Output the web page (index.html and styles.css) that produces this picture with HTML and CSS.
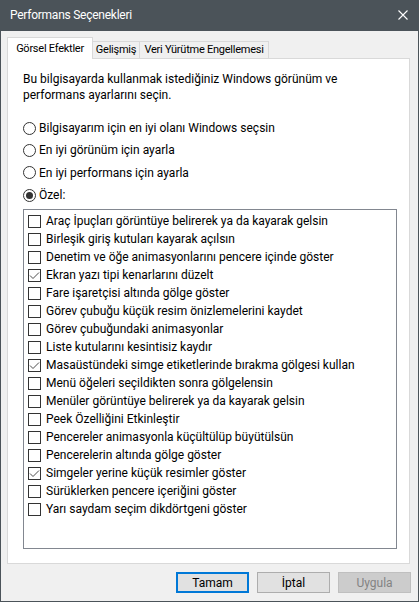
FILE: index.html
```html
<!DOCTYPE html>
<html lang="tr">
<head>
<meta charset="utf-8">
<title>Performans Seçenekleri</title>
<link rel="stylesheet" href="styles.css">
</head>
<body>
<div class="window">
  <div class="titlebar">
    <span class="title">Performans Seçenekleri</span>
    <svg class="close" width="10" height="10" viewBox="0 0 10 10"><path d="M0.5 0.5L9.5 9.5M9.5 0.5L0.5 9.5" stroke="#ffffff" stroke-width="1.1" fill="none"/></svg>
  </div>
  <div class="content">
    <div class="tabs">
      <div class="tab active tab-visual">Görsel Efektler</div>
      <div class="tab tab-adv">Gelişmiş</div>
      <div class="tab tab-dep">Veri Yürütme Engellemesi</div>
    </div>
    <div class="panel">
      <p class="intro">Bu bilgisayarda kullanmak istediğiniz Windows görünüm ve performans ayarlarını seçin.</p>
      <div class="radios">
        <div class="radio-row"><span class="radio"></span><span>Bilgisayarım için en iyi olanı Windows seçsin</span></div>
        <div class="radio-row"><span class="radio"></span><span>En iyi görünüm için ayarla</span></div>
        <div class="radio-row"><span class="radio"></span><span>En iyi performans için ayarla</span></div>
        <div class="radio-row"><span class="radio on"></span><span>Özel:</span></div>
      </div>
      <div class="listbox">
        <div class="item"><span class="cb"></span><span>Araç İpuçları görüntüye belirerek ya da kayarak gelsin</span></div>
        <div class="item"><span class="cb"></span><span>Birleşik giriş kutuları kayarak açılsın</span></div>
        <div class="item"><span class="cb"></span><span>Denetim ve öğe animasyonlarını pencere içinde göster</span></div>
        <div class="item"><span class="cb"><svg width="11" height="11" viewBox="0 0 11 11"><path d="M1 5.5L4 8.5L10 2.5" stroke="#4d4d4d" stroke-width="1" fill="none"/></svg></span><span>Ekran yazı tipi kenarlarını düzelt</span></div>
        <div class="item"><span class="cb"></span><span>Fare işaretçisi altında gölge göster</span></div>
        <div class="item"><span class="cb"></span><span>Görev çubuğu küçük resim önizlemelerini kaydet</span></div>
        <div class="item"><span class="cb"></span><span>Görev çubuğundaki animasyonlar</span></div>
        <div class="item"><span class="cb"></span><span>Liste kutularını kesintisiz kaydır</span></div>
        <div class="item"><span class="cb"><svg width="11" height="11" viewBox="0 0 11 11"><path d="M1 5.5L4 8.5L10 2.5" stroke="#4d4d4d" stroke-width="1" fill="none"/></svg></span><span>Masaüstündeki simge etiketlerinde bırakma gölgesi kullan</span></div>
        <div class="item"><span class="cb"></span><span>Menü öğeleri seçildikten sonra gölgelensin</span></div>
        <div class="item"><span class="cb"></span><span>Menüler görüntüye belirerek ya da kayarak gelsin</span></div>
        <div class="item"><span class="cb"></span><span>Peek Özelliğini Etkinleştir</span></div>
        <div class="item"><span class="cb"></span><span>Pencereler animasyonla küçültülüp büyütülsün</span></div>
        <div class="item"><span class="cb"></span><span>Pencerelerin altında gölge göster</span></div>
        <div class="item"><span class="cb"><svg width="11" height="11" viewBox="0 0 11 11"><path d="M1 5.5L4 8.5L10 2.5" stroke="#4d4d4d" stroke-width="1" fill="none"/></svg></span><span>Simgeler yerine küçük resimler göster</span></div>
        <div class="item"><span class="cb"></span><span>Sürüklerken pencere içeriğini göster</span></div>
        <div class="item"><span class="cb"></span><span>Yarı saydam seçim dikdörtgeni göster</span></div>
      </div>
    </div>
    <div class="buttons">
      <button class="btn default">Tamam</button>
      <button class="btn">İptal</button>
      <button class="btn disabled" disabled>Uygula</button>
    </div>
  </div>
</div>
</body>
</html>
```
FILE: styles.css
```css
* { box-sizing: border-box; }
html, body { margin: 0; padding: 0; }
body {
  font-family: Roboto, "Noto Sans", sans-serif;
  font-size: 12px;
  color: #000;
  background: #4b5359;
}
.window {
  width: 419px;
  height: 602px;
  background: #f0f0f0;
  border: 1px solid #4b5359;
  border-top: 0;
  display: flex;
  flex-direction: column;
}
.titlebar {
  height: 31px;
  flex: none;
  background: #4b5359;
  color: #ffffff;
  display: flex;
  align-items: center;
  justify-content: space-between;
  padding: 0 10px 1px 9px;
}
.title { letter-spacing: -0.25px; }
.close { display: block; margin-top: 0; }
.content {
  flex: 1;
  display: flex;
  flex-direction: column;
  padding: 6px 7px 8px 6px;
}
.tabs {
  display: flex;
  align-items: flex-end;
  height: 21px;
  position: relative;
  z-index: 1;
}
.tab {
  height: 17px;
  border: 1px solid #d9d9d9;
  border-bottom: 0;
  background: #f0f0f0;
  font-size: 11px;
  letter-spacing: -0.25px;
  line-height: 16px;
  text-align: center;
  white-space: nowrap;
  padding: 0;
  margin-left: -1px;
}
.tab-visual { width: 86px; }
.tab-adv { width: 48px; }
.tab-dep { width: 130px; }
.tab.active {
  height: 22px;
  margin-bottom: -1px;
  margin-left: 0;
  background: #ffffff;
  padding-top: 2px;
  line-height: 17px;
}
.panel {
  width: 403px;
  height: 506px;
  flex: none;
  background: #ffffff;
  border: 1px solid #d9d9d9;
  padding: 12px 12px 0 15px;
}
.intro {
  margin: 0;
  line-height: 16px;
  width: 330px;
}
.radios {
  margin-top: 14px;
}
.radio-row {
  height: 22.33px;
  display: flex;
  align-items: center;
  gap: 3px;
}
.radio {
  width: 13px;
  height: 13px;
  border: 1px solid #333333;
  border-radius: 50%;
  display: flex;
  align-items: center;
  justify-content: center;
  flex: none;
}
.radio.on::after {
  content: "";
  width: 7px;
  height: 7px;
  border-radius: 50%;
  background: #333333;
}
.listbox {
  margin-top: 3px;
  width: 374px;
  height: 340px;
  border: 1px solid #828790;
  padding: 2px 0 0 4px;
}
.item {
  height: 18px;
  display: flex;
  align-items: center;
  gap: 5px;
  white-space: nowrap;
}
.cb {
  width: 13px;
  height: 13px;
  border: 1px solid #333333;
  background: #ffffff;
  flex: none;
  display: flex;
  align-items: center;
  justify-content: center;
}
.cb svg { display: block; }
.buttons {
  margin-top: 8px;
  display: flex;
  justify-content: flex-end;
  gap: 8px;
}
.btn {
  width: 73px;
  height: 21px;
  font-family: Roboto, "Noto Sans", sans-serif;
  font-size: 12px;
  color: #000;
  background: #e1e1e1;
  border: 1px solid #adadad;
  padding: 0;
  margin: 0;
}
.btn.default {
  border: 2px solid #0078d7;
}
.btn.disabled {
  background: #cccccc;
  border-color: #bfbfbf;
  color: #838383;
}
```
